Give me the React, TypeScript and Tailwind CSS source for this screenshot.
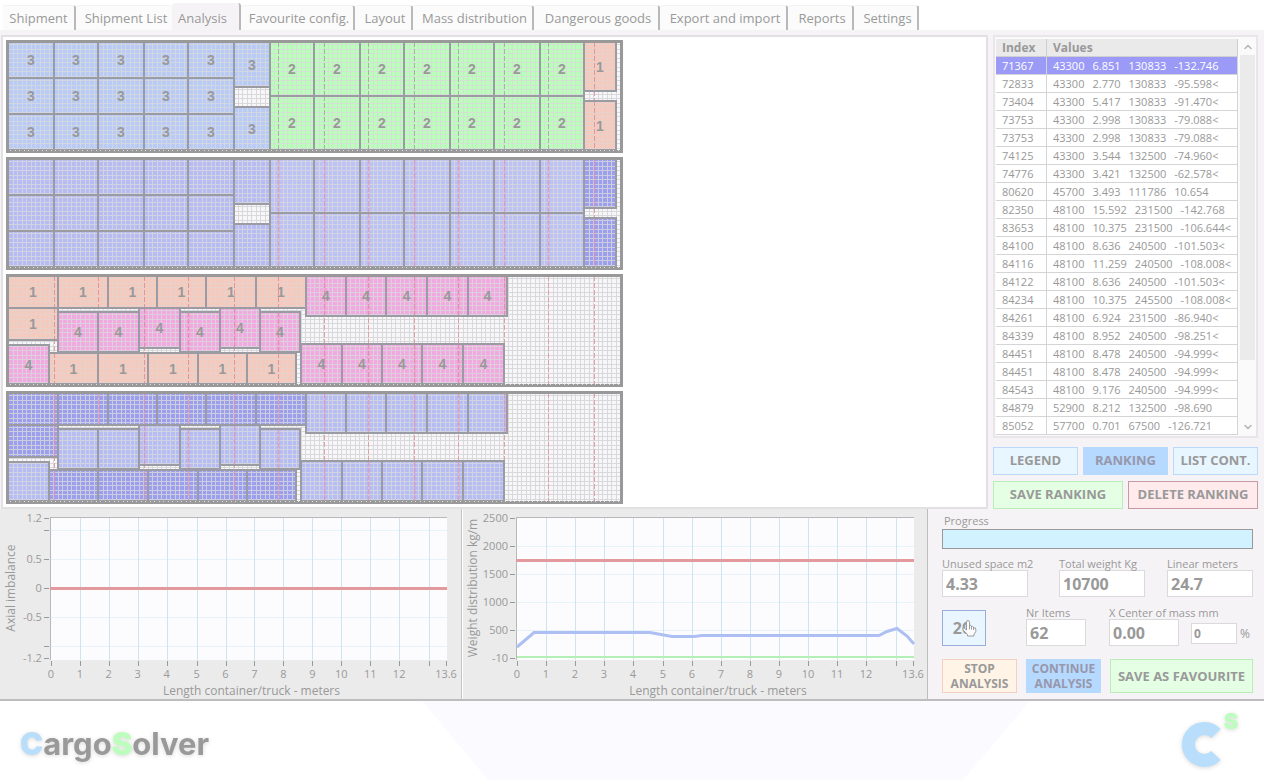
import React from "react";
import { ChevronDown, ChevronUp } from "lucide-react";

type Item = { x: number; y: number; w: number; h: number; kind: 1 | 2 | 3 | 4 };

const box = (x1: number, y1: number, x2: number, y2: number, kind: Item["kind"]): Item => ({
  x: x1,
  y: y1,
  w: x2 - x1,
  h: y2 - y1,
  kind,
});

const spans = (edges: number[], y1: number, y2: number, kind: Item["kind"]): Item[] =>
  edges.slice(1).map((edge, i) => box(edges[i], y1, edge, y2, kind));

/* Positions inside one container drawing, 617 x 113 */
const boxEdges = [2, 48, 92, 138, 182, 228];
const palletEdges = [264, 308, 354, 398, 444, 488, 534, 578];

const firstLoad: Item[] = [
  ...spans(boxEdges, 2, 38, 3),
  ...spans(boxEdges, 38, 74, 3),
  ...spans(boxEdges, 74, 110, 3),
  box(228, 2, 264, 47, 3),
  box(228, 67, 264, 110, 3),
  ...spans(palletEdges, 2, 56, 2),
  ...spans(palletEdges, 56, 110, 2),
  box(578, 2, 610, 51, 1),
  box(578, 61, 610, 110, 1),
];

const secondLoad: Item[] = [
  ...spans([2, 52, 102, 151, 200, 250, 300], 2, 34, 1),
  box(2, 34, 52, 66, 1),
  box(52, 38, 92, 78, 4),
  box(92, 38, 133, 78, 4),
  box(133, 34, 174, 74, 4),
  box(174, 38, 214, 78, 4),
  box(214, 34, 254, 74, 4),
  box(254, 38, 294, 78, 4),
  box(2, 71, 43, 110, 4),
  ...spans([43, 92, 142, 192, 241, 290], 79, 110, 1),
  ...spans([300, 340, 380, 421, 462, 501], 2, 42, 4),
  ...spans([295, 336, 376, 416, 457, 498], 70, 110, 4),
];

const goodsColor = { 1: "#f5cabc", 2: "#b9ffb9", 3: "#b8caf6", 4: "#f2a8e0" };
const weightColor = { 1: "#9c9fee", 2: "#bcc2f4", 3: "#b7bbf4", 4: "#b6bcf4" };
const meterLines = [48, 92, 138, 182, 228, 272, 318, 362, 408, 452, 498, 542, 588];

function Container({ id, items, weights, label }: { id: string; items: Item[]; weights?: boolean; label: string }) {
  return (
    <svg width="617" height="113" viewBox="0 0 617 113" role="img" aria-label={label} shapeRendering="crispEdges">
      <defs>
        <pattern id={id} width="9" height="9" x="3" y="5" patternUnits="userSpaceOnUse">
          <path d="M4.5 0V9M8.5 0V9M0 4.5H9M0 8.5H9" stroke="#d9d9dc" strokeWidth="1" fill="none" />
        </pattern>
      </defs>
      <rect width="617" height="113" fill="#f7f6f8" />
      <rect x="2" y="2" width="612" height="108" fill={`url(#${id})`} />
      {meterLines.map((x) => (
        <path key={x} d={`M${x + 0.5} 2V110`} stroke="#e2a0a2" strokeDasharray="5 2" />
      ))}
      {items.map((it, i) => (
        <g key={i}>
          <rect x={it.x} y={it.y} width={it.w} height={it.h} fill={weights ? weightColor[it.kind] : goodsColor[it.kind]} />
          <rect
            x={it.x}
            y={it.y}
            width={it.w}
            height={it.h}
            fill={`url(#${id})`}
            opacity={it.kind === 1 && !weights ? 0.45 : 0.8}
          />
          {it.kind !== 3 &&
            meterLines
              .filter((x) => x > it.x + 2 && x < it.x + it.w - 2)
              .map((x) => (
                <g key={x}>
                  {(weights || it.kind === 4) && (
                    <rect x={x - 1} y={it.y} width="3" height={it.h} fill="#e58ac4" opacity="0.2" />
                  )}
                  <path
                    d={`M${x + 0.5} ${it.y}V${it.y + it.h}`}
                    stroke={it.kind === 2 && !weights ? "#a5a99f" : "#dc8d9c"}
                    strokeDasharray="5 2"
                    opacity={weights ? 0.6 : 0.85}
                  />
                </g>
              ))}
          <rect x={it.x} y={it.y} width={it.w} height={it.h} fill="none" stroke="#9b9ba3" strokeWidth="2" />
        </g>
      ))}
      {!weights &&
        items.map((it, i) => (
          <text
            key={i}
            x={it.x + it.w / 2}
            y={it.y + it.h / 2 + 5}
            textAnchor="middle"
            className="fill-[#999999] font-['Liberation_Sans',sans-serif] text-[14px] font-bold"
          >
            {it.kind}
          </text>
        ))}
      <path d="M0 1.5H617M1 0V113M615.5 0V113M0 111.5H617" stroke="#999999" strokeWidth="3" fill="none" />
      <path d="M4 110.5H614" stroke="#dedede" strokeDasharray="1 3.5" />
    </svg>
  );
}

type Tick = { y: number; label: string };

const xTicks = [51, 80, 109, 138, 167, 197, 226, 255, 284, 313, 342, 371, 400, 430, 447];
const xLabels = ["0", "1", "2", "3", "4", "5", "6", "7", "8", "9", "10", "11", "12", "", "13.6"];

function Chart({
  title,
  ticks,
  lines,
  titleX,
  shift,
  children,
}: {
  title: string;
  ticks: Tick[];
  lines: number[];
  titleX: number;
  shift: number;
  children: React.ReactNode;
}) {
  return (
    <svg
      viewBox="0 0 462 190"
      className="block h-[190px] w-full fill-[#999999] font-['Open_Sans','Noto_Sans',sans-serif] text-[11px]"
      role="img"
      aria-label={title}
    >
      <g transform={`translate(${shift} 0)`}>
        <g shapeRendering="crispEdges">
          <rect x="50" y="8" width="398" height="143" fill="#fcfcfe" />
          {lines.map((y) => (
            <path key={y} d={`M51 ${y + 0.5}H448`} stroke="#e6f4fa" />
          ))}
          {xTicks.slice(1, -1).map((x) => (
            <path key={x} d={`M${x + 0.5} 9V151`} stroke="#cde5ee" />
          ))}
          <path d="M448 8.5H50.5V151" stroke="#b8b8b8" fill="none" />
          {xTicks.map((x) => (
            <path key={x} d={`M${x + 0.5} 152V157`} stroke="#999999" />
          ))}
          {ticks.map((t) => (
            <path key={t.y} d={`M44 ${t.y + 0.5}H49`} stroke="#999999" />
          ))}
        </g>
        {children}
        {ticks.map((t) => (
          <text key={t.y} x="42" y={t.y + 4} textAnchor="end">
            {t.label}
          </text>
        ))}
        {xTicks.map((x, i) => (
          <text key={x} x={x} y="169" textAnchor="middle">
            {xLabels[i]}
          </text>
        ))}
        <text x="252" y="186" textAnchor="middle" className="text-[12px]">
          Length container/truck - meters
        </text>
        <text transform={`translate(${titleX} 79) rotate(-90)`} textAnchor="middle" className="text-[12px]">
          {title}
        </text>
      </g>
    </svg>
  );
}

const tabs = [
  { name: "Shipment", size: "w-[73px]" },
  { name: "Shipment List", size: "w-[96px]" },
  { name: "Analysis", size: "w-[69px]" },
  { name: "Favourite config.", size: "w-[114px]" },
  { name: "Layout", size: "w-[58px]" },
  { name: "Mass distribution", size: "w-[121px]" },
  { name: "Dangerous goods", size: "w-[126px]" },
  { name: "Export and import", size: "w-[128px]" },
  { name: "Reports", size: "w-[66px]" },
  { name: "Settings", size: "w-[65px]" },
];

const ranking: [string, string[]][] = [
  ["71367", ["43300", "6.851", "130833", "-132.746"]],
  ["72833", ["43300", "2.770", "130833", "-95.598<"]],
  ["73404", ["43300", "5.417", "130833", "-91.470<"]],
  ["73753", ["43300", "2.998", "130833", "-79.088<"]],
  ["73753", ["43300", "2.998", "130833", "-79.088<"]],
  ["74125", ["43300", "3.544", "132500", "-74.960<"]],
  ["74776", ["43300", "3.421", "132500", "-62.578<"]],
  ["80620", ["45700", "3.493", "111786", "10.654"]],
  ["82350", ["48100", "15.592", "231500", "-142.768"]],
  ["83653", ["48100", "10.375", "231500", "-106.644<"]],
  ["84100", ["48100", "8.636", "240500", "-101.503<"]],
  ["84116", ["48100", "11.259", "240500", "-108.008<"]],
  ["84122", ["48100", "8.636", "240500", "-101.503<"]],
  ["84234", ["48100", "10.375", "245500", "-108.008<"]],
  ["84261", ["48100", "6.924", "231500", "-86.940<"]],
  ["84339", ["48100", "8.952", "240500", "-98.251<"]],
  ["84451", ["48100", "8.478", "240500", "-94.999<"]],
  ["84451", ["48100", "8.478", "240500", "-94.999<"]],
  ["84543", ["48100", "9.176", "240500", "-94.999<"]],
  ["84879", ["52900", "8.212", "132500", "-98.690"]],
  ["85052", ["57700", "0.701", "67500", "-126.721"]],
];

function Field({ id, label, value, size }: { id: string; label: string; value: string; size: string }) {
  return (
    <div className={size}>
      <label htmlFor={id} className="block h-3 text-[11px] leading-3 whitespace-nowrap">
        {label}
      </label>
      <input
        id={id}
        defaultValue={value}
        className="block h-[27px] w-full border border-[#dadada] bg-white px-[3px] text-[16px] font-bold"
      />
    </div>
  );
}

function RankingTable() {
  return (
    <div className="flex border-2 border-[#e9e6e9] bg-[#fafafa] p-px pt-0.5">
      <table className="w-[243px] table-fixed border-separate border-spacing-0 bg-white text-left text-[11px] leading-4">
        <thead>
          <tr className="h-[18px] bg-[#eaeaea] text-[12px]">
            <th className="w-[51px] border-r border-b border-[#cfcfcf] p-0 pl-1.5 font-bold">Index</th>
            <th className="border-r border-b border-[#cfcfcf] p-0 pl-1.5 font-bold">Values</th>
          </tr>
        </thead>
        <tbody>
          {ranking.map(([index, values], i) => (
            <tr key={i} aria-selected={i === 0} className={i === 0 ? "h-[18px] bg-[#9b9bf7] text-white" : "h-[18px]"}>
              <td className="border-r border-b border-[#d5d5d8] p-0 pl-1.5">{index}</td>
              <td className="border-r border-b border-[#d5d5d8] p-0 pl-1.5">
                <div className="flex gap-2">
                  {values.map((v, j) => (
                    <span key={j}>{v}</span>
                  ))}
                </div>
              </td>
            </tr>
          ))}
        </tbody>
      </table>
      <div className="ml-0.5 flex w-[15px] flex-col items-center bg-[#fafafa]">
        <button aria-label="Scroll up" className="flex h-4 items-center">
          <ChevronUp size={12} strokeWidth={3} color="#b5b5b5" />
        </button>
        <div className="h-[305px] w-full bg-[#ebebeb]" />
        <button aria-label="Scroll down" className="mt-auto flex h-4 items-center">
          <ChevronDown size={12} strokeWidth={3} color="#b5b5b5" />
        </button>
      </div>
    </div>
  );
}

export default function App() {
  return (
    <div className="flex min-h-screen flex-col bg-white font-['Open_Sans','Noto_Sans',sans-serif] text-[#999999]">
      <nav role="tablist" className="flex h-[35px] items-start border-b-[5px] border-[#f6f3f6] pl-[3px] text-[13px]">
        {tabs.map((tab, i) => (
          <button
            key={tab.name}
            role="tab"
            aria-selected={i === 2}
            className={`${tab.size} ${
              i === 2
                ? "mt-[3px] h-[27px] bg-[#f6f3f6] pt-1 pr-1.5"
                : "mt-[5px] h-[25px] border-t border-t-[#f2f2f2] bg-[#fbfbfb] pt-0.5"
            } shrink-0 rounded-t-[3px] ${i === 1 ? "" : "border-r-2 border-r-[#b9b9b9]"} ${
              i === 0 || i === 2 ? "" : "pl-1"
            } whitespace-nowrap`}
          >
            {tab.name}
          </button>
        ))}
      </nav>

      <main>
        <div className="flex bg-[#f6f3f6]">
          <section className="ml-px flex flex-1 flex-col gap-1 border-2 border-[#e2e0e3] bg-white p-[3px]">
            <Container id="grid-a" items={firstLoad} label="Container 1 load plan" />
            <Container id="grid-b" items={firstLoad} weights label="Container 1 weights" />
            <Container id="grid-c" items={secondLoad} label="Container 2 load plan" />
            <Container id="grid-d" items={secondLoad} weights label="Container 2 weights" />
          </section>
          <aside className="mr-1.5 ml-[5px] w-[265px]">
            <RankingTable />
            <div className="mt-[9px] grid grid-cols-3 gap-[5px] text-[13px] font-bold whitespace-nowrap">
              <button className="h-7 border border-[#bcd8fb] bg-[#e8f7ff]">LEGEND</button>
              <button className="h-7 bg-[#b6d9ff] text-[#9797ab]">RANKING</button>
              <button className="h-7 border border-[#bcd8fb] bg-[#e8f7ff]">LIST CONT.</button>
            </div>
            <div className="mt-1.5 grid grid-cols-2 gap-[5px] text-[13px] font-bold whitespace-nowrap">
              <button className="h-7 border border-[#b9eeb9] bg-[#e4ffe4]">SAVE RANKING</button>
              <button className="h-7 border border-[#c999a5] bg-[#ffeaec]">DELETE RANKING</button>
            </div>
          </aside>
        </div>

        <div className="grid grid-cols-[462fr_465fr_337fr] border-b-2 border-[#bdbdbd] bg-[#ebebeb]">
          <section className="border-r border-[#c4c4c4]">
            <Chart
              title="Axial imbalance"
              titleX={15}
              shift={0}
              lines={[21, 50, 108, 137]}
              ticks={[
                { y: 9, label: "1.2" },
                { y: 21, label: "" },
                { y: 50, label: "0.5" },
                { y: 79, label: "0" },
                { y: 108, label: "-0.5" },
                { y: 137, label: "" },
                { y: 149, label: "-1.2" },
              ]}
            >
              <path d="M50 79.5H448" stroke="#e39a9e" strokeWidth="3" />
            </Chart>
          </section>
          <section className="border-l border-white">
            <Chart
              title="Weight distribution kg/m"
              titleX={11}
              shift={2}
              lines={[37, 65, 93, 121]}
              ticks={[
                { y: 9, label: "2500" },
                { y: 37, label: "2000" },
                { y: 65, label: "1500" },
                { y: 93, label: "1000" },
                { y: 121, label: "500" },
                { y: 149, label: "-10" },
              ]}
            >
              <path d="M50 51.5H448" stroke="#e39a9e" strokeWidth="3" />
              <path d="M51 148H448" stroke="#b4efb4" strokeWidth="2" />
              <path
                d="M51 138L68 123.5H184L206 127.5H228L236 126.5H413L421 122.5L431 119.5L441 127L448 135"
                fill="none"
                stroke="#adbff3"
                strokeWidth="3"
              />
            </Chart>
          </section>
          <section className="flex flex-col border-l border-[#bdbdbd] bg-[#f6f3f6] pt-1.5 pr-[11px] pb-1.5 pl-[14px]">
            <label htmlFor="progress" className="block h-3.5 pl-0.5 text-[11px] leading-3">
              Progress
            </label>
            <div
              id="progress"
              role="progressbar"
              aria-label="Progress"
              aria-valuenow={99}
              className="h-5 border border-[#999999] bg-[#d1f2fe]"
            />
            <div className="mt-[9px] flex">
              <Field id="space" label="Unused space m2" value="4.33" size="mr-[31px] w-[86px]" />
              <Field id="weight" label="Total weight Kg" value="10700" size="mr-[22px] w-[86px]" />
              <Field id="meters" label="Linear meters" value="24.7" size="w-[86px]" />
            </div>
            <div className="mt-2.5 flex items-end">
              <button className="relative mr-10 h-9 w-11 border border-[#99acdb] bg-[#e9f5ff] pr-1 text-[16px] font-bold">
                20
                <svg className="absolute top-2 left-[18px]" width="16" height="18" viewBox="0 0 16 18">
                  <path
                    d="M5.5 11V3.2Q5.5 1.5 7 1.5T8.5 3.2V7Q9.5 6 10.5 7V8Q11.7 7 12.5 8V9Q14.8 8.2 14.8 10V12.5L13 15.5V17H6.5V15.5L2 10.8Q1.2 9 3 8.8L5.5 11Z"
                    fill="#fdfdff"
                    stroke="#9b9b9b"
                  />
                  <path d="M8.5 7V10.5M10.5 8V10.5M12.5 9V11" stroke="#9b9b9b" />
                </svg>
              </button>
              <Field id="items" label="Nr Items" value="62" size="mr-[23px] w-[60px]" />
              <Field id="center" label="X Center of mass mm" value="0.00" size="mr-3 w-[70px]" />
              <input
                aria-label="Center of mass percent"
                defaultValue="0"
                className="mb-0.5 h-[21px] w-[46px] border border-[#dadada] bg-white px-0.5 text-[12px] font-bold"
              />
              <span className="mb-0.5 ml-[3px] text-[12px] leading-5">%</span>
            </div>
            <div className="mt-[13px] flex gap-[9px] text-[12px] leading-[15px] font-bold">
              <button className="h-[34px] w-[75px] border border-[#f5cfc4] bg-[#fff4e6]">STOP ANALYSIS</button>
              <button className="h-[34px] w-[75px] bg-[#b6d9ff] text-[#9797ab]">CONTINUE ANALYSIS</button>
              <button className="h-[34px] flex-1 border border-[#b9eeb9] bg-[#e4ffe4] text-[13px] whitespace-nowrap">
                SAVE AS FAVOURITE
              </button>
            </div>
          </section>
        </div>
      </main>

      <footer className="relative flex flex-1 items-start justify-between pr-5 pl-5 font-['Inter',sans-serif]">
        <svg className="absolute inset-0 h-full w-full" viewBox="0 0 1264 79" preserveAspectRatio="none" aria-hidden="true">
          <path d="M422 0H1030L963 79H488Z" fill="#fbfbff" />
        </svg>
        <div className="relative pt-[25px] text-[31px] leading-9 font-bold drop-shadow-sm">
          <span className="font-black text-[#b8defb]">C</span>argo
          <span className="font-black text-[#bdfdbd]">S</span>olver
        </div>
        <svg className="relative drop-shadow-sm" width="66" height="74" viewBox="0 0 66 74" role="img" aria-label="CargoSolver">
          <path d="M38 32.5A16 16 0 1 0 38 54.5" fill="none" stroke="#b8defb" strokeWidth="13" />
          <text x="53" y="28" textAnchor="middle" className="fill-[#bdfdbd] text-[22px] font-black">
            S
          </text>
        </svg>
      </footer>
    </div>
  );
}
